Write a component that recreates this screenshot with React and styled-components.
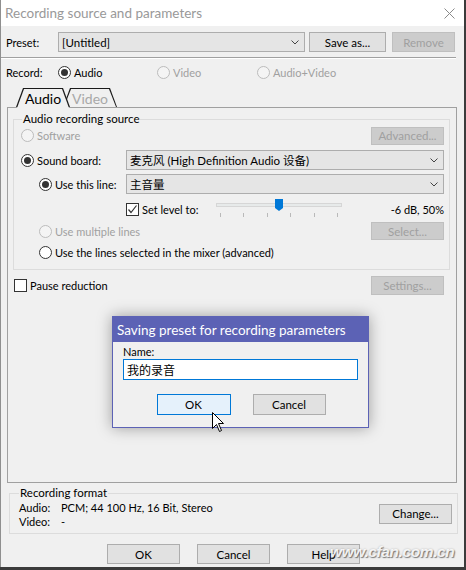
import React from 'react';
import styled, { createGlobalStyle } from 'styled-components';

const font = '"Segoe UI", Lato, "Noto Sans CJK SC", sans-serif';

const GlobalStyle = createGlobalStyle`
  html, body { margin: 0; padding: 0; background: #3b3b3b; }
  body { font-family: ${font}; font-size: 11px; color: #000; }
  * { box-sizing: border-box; }
`;

const Stage = styled.div`
  position: relative;
  width: 466px;
  height: 570px;
  overflow: hidden;
  background: #3b3b3b;
`;

const Window = styled.div`
  width: 464px;
  height: 567px;
  background: #f0f0f0;
  border-left: 1px solid #8f8f8f;
  display: flex;
  flex-direction: column;
`;

const TitleBar = styled.div`
  height: 26px;
  flex: none;
  background: #fff;
  display: flex;
  align-items: center;
  padding: 0 9px 0 4px;
`;

const Title = styled.span`
  font-size: 13.5px;
  color: #999;
`;

const CloseIcon = styled.svg`
  margin-left: auto;
`;

const Row = styled.div`
  display: flex;
  align-items: center;
  height: ${p => p.$h || 20}px;
  margin-top: ${p => p.$mt || 0}px;
  padding-left: ${p => p.$pl || 0}px;
  padding-right: ${p => p.$pr || 0}px;
  flex: none;
`;

const Label = styled.span`
  display: inline-block;
  width: ${p => (p.$w ? p.$w + 'px' : 'auto')};
  margin-left: ${p => (p.$push ? 'auto' : '0')};
  flex: none;
  color: ${p => (p.$disabled ? '#a0a0a0' : '#000')};
  white-space: nowrap;
`;

const Combo = styled.div`
  width: ${p => (p.$w ? p.$w + 'px' : 'auto')};
  flex: ${p => (p.$w ? 'none' : '1')};
  height: 20px;
  background: #e5e5e5;
  border: 1px solid #adadad;
  display: flex;
  align-items: center;
  padding: 0 5px 0 3px;
  font-size: ${p => (p.$cjk ? 11.5 : 11.5)}px;
  white-space: nowrap;
  span { flex: 1; }
`;

const Button = styled.div`
  width: ${p => p.$w || 73}px;
  height: ${p => p.$h || 20}px;
  flex: none;
  margin-left: ${p => (p.$ml === 'auto' ? 'auto' : (p.$ml || 0) + 'px')};
  display: flex;
  align-items: center;
  justify-content: center;
  background: ${p => (p.$disabled ? '#cccccc' : p.$focus ? '#e5f1fb' : '#e1e1e1')};
  border: 1px solid ${p => (p.$disabled ? '#bfbfbf' : p.$focus ? '#0078d7' : '#adadad')};
  color: ${p => (p.$disabled ? '#a0a0a0' : '#000')};
  font-size: 11.5px;
`;

const Separator = styled.div`
  width: 455px;
  height: 2px;
  margin-top: 5px;
  border-top: 1px solid #a0a0a0;
  border-bottom: 1px solid #fff;
  flex: none;
`;

const RadioWrap = styled.span`
  display: inline-flex;
  align-items: center;
  gap: 3px;
  width: ${p => (p.$w ? p.$w + 'px' : 'auto')};
  flex: none;
  color: ${p => (p.$disabled ? '#a0a0a0' : '#000')};
  white-space: nowrap;
`;

const Circle = styled.span`
  width: 13px;
  height: 13px;
  border-radius: 50%;
  border: 1px solid ${p => (p.$disabled ? '#bcbcbc' : '#333')};
  background: ${p => (p.$disabled ? '#f4f4f4' : '#fff')};
  display: inline-flex;
  align-items: center;
  justify-content: center;
  flex: none;
  &::after {
    content: '';
    width: 7px;
    height: 7px;
    border-radius: 50%;
    background: #333;
    display: ${p => (p.$checked ? 'block' : 'none')};
  }
`;

const Box = styled.span`
  width: 13px;
  height: 13px;
  border: 1px solid #333;
  background: #fff;
  display: inline-flex;
  align-items: center;
  justify-content: center;
  flex: none;
`;

const Radio = ({ checked, disabled, w, children }) => (
  <RadioWrap $disabled={disabled} $w={w}>
    <Circle $checked={checked} $disabled={disabled} />
    {children}
  </RadioWrap>
);

const Check = ({ checked, w, children }) => (
  <RadioWrap $w={w}>
    <Box>
      {checked && (
        <svg width="11" height="11" viewBox="0 0 11 11">
          <polyline points="1.5,5.5 4,8.5 9.5,1.5" fill="none" stroke="#333" strokeWidth="1.2" />
        </svg>
      )}
    </Box>
    {children}
  </RadioWrap>
);

const Chevron = () => (
  <svg width="8" height="5" viewBox="0 0 8 5">
    <polyline points="0.5,0.5 4,4 7.5,0.5" fill="none" stroke="#444" strokeWidth="1" />
  </svg>
);

const TabStrip = styled.div`
  display: flex;
  height: 19px;
  margin-top: 8px;
  padding-left: 15px;
  position: relative;
  z-index: 2;
  flex: none;
`;

const Tab = styled.div`
  position: relative;
  width: 54px;
  height: 19px;
  margin-left: ${p => (p.$first ? 0 : -7)}px;
  z-index: ${p => (p.$active ? 2 : 1)};
  display: flex;
  align-items: center;
  justify-content: center;
  font-size: 14px;
  color: ${p => (p.$active ? '#000' : '#a8a8a8')};
  padding-top: 1px;
  &::before, &::after {
    content: '';
    position: absolute;
    clip-path: polygon(0 100%, 7px 0, calc(100% - 7px) 0, 100% 100%);
  }
  &::before { inset: 0; background: #1a1a1a; }
  &::after {
    top: 1px; left: 1px; right: 1px;
    bottom: ${p => (p.$active ? -1 : 0)}px;
    background: #f0f0f0;
  }
  span { position: relative; z-index: 1; }
`;

const Panel = styled.div`
  width: 450px;
  height: 376px;
  margin-left: 6px;
  border: 1px solid #a0a0a0;
  padding: 11px 6px 0 5px;
  flex: none;
  display: flex;
  flex-direction: column;
`;

const Group = styled.div`
  position: relative;
  height: ${p => p.$h}px;
  border: 1px solid #dcdcdc;
  flex: none;
`;

const FormatGroup = styled(Group)`
  width: 449px;
  margin: 10px 0 0 8px;
`;

const Legend = styled.span`
  position: absolute;
  top: -9px;
  left: ${p => p.$left}px;
  padding: 0 1px;
  background: #f0f0f0;
  line-height: 16px;
  font-size: 11.5px;
`;

const SourceBody = styled.div`
  padding: 6px 5px 0 7px;
  display: flex;
  flex-direction: column;
`;

const Slider = styled.div`
  position: relative;
  width: 126px;
  height: 20px;
  flex: none;
  align-self: flex-start;
`;

const Track = styled.div`
  position: absolute;
  top: 4px;
  left: 0;
  right: 0;
  height: 4px;
  background: #e7eaea;
  border: 1px solid #d6d6d6;
`;

const Thumb = styled.div`
  position: absolute;
  top: 0;
  left: calc(${p => p.$value}% - 4px);
  width: 8px;
  height: 12px;
  background: #0078d7;
  clip-path: polygon(0 0, 100% 0, 100% 75%, 50% 100%, 0 75%);
`;

const Ticks = styled.div`
  position: absolute;
  top: 14px;
  left: 4px;
  right: 4px;
  display: flex;
  justify-content: space-between;
  i { width: 1px; height: 4px; background: #b9b9b9; }
`;

const FormatBody = styled.div`
  display: flex;
  align-items: center;
  height: 100%;
  padding: 0 5px 0 9px;
`;

const FormatText = styled.div`
  align-self: flex-start;
  padding-top: 7px;
  line-height: 14px;
`;

const Footer = styled.div`
  display: flex;
  gap: 17px;
  padding-left: 106px;
  margin-top: 10px;
`;

const Dialog = styled.div`
  position: absolute;
  left: 112px;
  top: 316px;
  width: 257px;
  height: 112px;
  background: #f0f0f0;
  border: 1px solid #5c62b5;
  box-shadow: 0 0 14px rgba(0, 0, 0, 0.35);
  display: flex;
  flex-direction: column;
`;

const DialogTitle = styled.div`
  height: 25px;
  background: #5c62b5;
  color: #fff;
  font-size: 13.5px;
  display: flex;
  align-items: center;
  padding-left: 4px;
  flex: none;
`;

const DialogBody = styled.div`
  padding: 3px 10px 0;
  display: flex;
  flex-direction: column;
`;

const Input = styled.div`
  height: 21px;
  margin-top: 1px;
  background: #fff;
  border: 1px solid #0078d7;
  display: flex;
  align-items: center;
  padding-left: 3px;
  font-size: 12px;
`;

const DialogButtons = styled.div`
  display: flex;
  justify-content: center;
  gap: 22px;
  margin-top: 14px;
  padding-left: 1px;
`;

const Cursor = styled.svg`
  position: absolute;
  left: 212px;
  top: 412px;
`;

const Watermark = styled.div`
  position: absolute;
  left: 330px;
  top: 543px;
  font-family: "Liberation Sans", sans-serif;
  font-style: italic;
  font-weight: bold;
  font-size: 15.5px;
  letter-spacing: -0.4px;
  color: rgba(255, 255, 255, 0.9);
  text-shadow: 1px 1px 1px rgba(0, 0, 0, 0.45), 0 0 2px rgba(0, 0, 0, 0.25);
`;

export default function App() {
  return (
    <>
      <GlobalStyle />
      <Stage>
        <Window>
          <TitleBar>
            <Title>Recording source and parameters</Title>
            <CloseIcon width="11" height="11" viewBox="0 0 11 11">
              <path d="M0.5 0.5 L10.5 10.5 M10.5 0.5 L0.5 10.5" stroke="#8a8a8a" strokeWidth="1" />
            </CloseIcon>
          </TitleBar>

          <Row $mt={6} $pl={5}>
            <Label $w={52}>Preset:</Label>
            <Combo $w={247}>
              <span>[Untitled]</span>
              <Chevron />
            </Combo>
            <Button $w={77} $ml={4}>Save as...</Button>
            <Button $w={63} $ml={6} $disabled>Remove</Button>
          </Row>
          <Separator />

          <Row $h={16} $mt={5} $pl={5}>
            <Label $w={52}>Record:</Label>
            <Radio checked w={99}>Audio</Radio>
            <Radio disabled w={100}>Video</Radio>
            <Radio disabled>Audio+Video</Radio>
          </Row>

          <TabStrip>
            <Tab $first $active><span>Audio</span></Tab>
            <Tab><span>Video</span></Tab>
          </TabStrip>
          <Panel>
            <Group $h={151}>
              <Legend $left={8}>Audio recording source</Legend>
              <SourceBody>
                <Row $h={19}>
                  <Radio disabled>Software</Radio>
                  <Button $h={18} $ml="auto" $disabled>Advanced...</Button>
                </Row>
                <Row $mt={5}>
                  <Radio checked w={105}>Sound board:</Radio>
                  <Combo $cjk>
                    <span>麦克风 (High Definition Audio 设备)</span>
                    <Chevron />
                  </Combo>
                </Row>
                <Row $mt={4} $pl={18}>
                  <Radio checked w={87}>Use this line:</Radio>
                  <Combo $cjk>
                    <span>主音量</span>
                    <Chevron />
                  </Combo>
                </Row>
                <Row $mt={5} $pl={105}>
                  <Check checked w={90}>Set level to:</Check>
                  <Slider>
                    <Track />
                    <Thumb $value={50} />
                    <Ticks>
                      <i /><i /><i /><i /><i /><i />
                    </Ticks>
                  </Slider>
                  <Label $push>-6 dB, 50%</Label>
                </Row>
                <Row $h={18} $mt={3} $pl={18}>
                  <Radio disabled>Use multiple lines</Radio>
                  <Button $h={18} $ml="auto" $disabled>Select...</Button>
                </Row>
                <Row $h={18} $mt={3} $pl={18}>
                  <Radio>Use the lines selected in the mixer (advanced)</Radio>
                </Row>
              </SourceBody>
            </Group>
            <Row $h={19} $mt={6} $pl={1} $pr={6}>
              <Check>Pause reduction</Check>
              <Button $h={19} $ml="auto" $disabled>Settings...</Button>
            </Row>
          </Panel>

          <FormatGroup $h={41}>
            <Legend $left={9}>Recording format</Legend>
            <FormatBody>
              <FormatText>
                <div><Label $w={42}>Audio:</Label>PCM; 44 100 Hz, 16 Bit, Stereo</div>
                <div><Label $w={42}>Video:</Label>-</div>
              </FormatText>
              <Button $ml="auto">Change...</Button>
            </FormatBody>
          </FormatGroup>

          <Footer>
            <Button>OK</Button>
            <Button>Cancel</Button>
            <Button>Help</Button>
          </Footer>
        </Window>

        <Dialog>
          <DialogTitle>Saving preset for recording parameters</DialogTitle>
          <DialogBody>
            <Label>Name:</Label>
            <Input>我的录音</Input>
            <DialogButtons>
              <Button $w={74} $h={21} $focus>OK</Button>
              <Button $h={21}>Cancel</Button>
            </DialogButtons>
          </DialogBody>
        </Dialog>

        <Cursor width="13" height="21" viewBox="0 0 13 21">
          <path d="M0.5 0.5 L0.5 16.5 L4.5 12.5 L7.5 19.5 L9.5 18.5 L6.5 11.5 L11.5 11.5 Z" fill="#fff" stroke="#000" strokeWidth="1" strokeLinejoin="miter" />
        </Cursor>

        <Watermark>www.cfan.com.cn</Watermark>
      </Stage>
    </>
  );
}
